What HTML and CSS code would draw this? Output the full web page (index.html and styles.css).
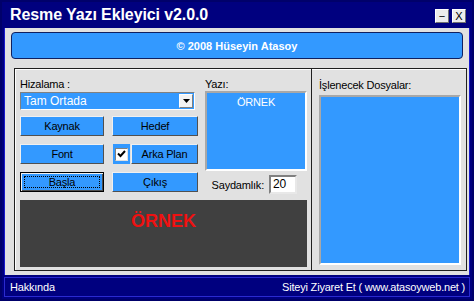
FILE: index.html
```html
<!DOCTYPE html>
<html>
<head>
<meta charset="utf-8">
<link rel="stylesheet" href="styles.css">
</head>
<body>
<div class="window">
  <div class="titlebar">
    <span class="title">Resme Yazı Ekleyici v2.0.0</span>
    <div class="tb-buttons">
      <span class="tb-btn">&minus;</span>
      <span class="tb-btn">X</span>
    </div>
  </div>
  <div class="client">
    <div class="banner">© 2008 Hüseyin Atasoy</div>
    <div class="panel">
      <div class="left">
        <div class="top">
          <div class="controls">
            <div class="lbl">Hizalama :</div>
            <div class="select">
              <span>Tam Ortada</span>
              <span class="arrow"><svg width="7" height="4" viewBox="0 0 7 4"><path d="M0 0H7L3.5 4Z" fill="#000"/></svg></span>
            </div>
            <div class="btn-grid">
              <div class="btn">Kaynak</div>
              <div class="btn">Hedef</div>
              <div class="btn">Font</div>
              <div class="chk-row">
                <div class="chk-wrap"><span class="chk"><svg width="9" height="8" viewBox="0 0 9 8"><path d="M1 3.5L3.5 6L8 1" fill="none" stroke="#000" stroke-width="2"/></svg></span></div>
                <div class="btn">Arka Plan</div>
              </div>
              <div class="btn btn-default"><span class="focus">Başla</span></div>
              <div class="btn">Çıkış</div>
            </div>
          </div>
          <div class="yazi">
            <div class="lbl">Yazı:</div>
            <div class="textarea">ÖRNEK</div>
            <div class="sayd">
              <span>Saydamlık:</span>
              <span class="input">20</span>
            </div>
          </div>
        </div>
        <div class="preview">ÖRNEK</div>
      </div>
      <div class="right">
        <div class="lbl">İşlenecek Dosyalar:</div>
        <div class="listbox"></div>
      </div>
    </div>
  </div>
  <div class="status">
    <span>Hakkında</span>
    <span>Siteyi Ziyaret Et ( www.atasoyweb.net )</span>
  </div>
</div>
</body>
</html>
```

FILE: styles.css
```css
* { box-sizing: border-box; }
html, body { margin: 0; padding: 0; }
body {
  width: 474px;
  height: 301px;
  overflow: hidden;
  font-family: "Liberation Sans", Arial, sans-serif;
  font-size: 11px;
  letter-spacing: -0.2px;
  color: #000;
}
.window {
  width: 474px;
  height: 301px;
  background: #00007f;
  border: 2px solid #00006a;
  padding: 0 2px 2px;
  display: flex;
  flex-direction: column;
}
.titlebar {
  height: 26px;
  flex: none;
  display: flex;
  align-items: center;
  justify-content: space-between;
  padding: 0 4px 0 6px;
}
.title {
  color: #fff;
  font-weight: bold;
  font-size: 16px;
  letter-spacing: -0.1px;
}
.tb-buttons { display: flex; gap: 3px; padding-top: 1px; }
.tb-btn {
  width: 14px;
  height: 14px;
  background: #ececec;
  border: 1px solid;
  border-color: #fff #707070 #707070 #fff;
  font-size: 11px;
  line-height: 12px;
  text-align: center;
  color: #000;
  letter-spacing: 0;
}
.client {
  flex: 1;
  background: #e1e1e1;
  border-left: 1px solid #1a1acc;
  border-right: 1px solid #1a1acc;
  padding: 4px 2px 4px 6px;
  display: flex;
  flex-direction: column;
}
.banner {
  height: 27px;
  margin-right: 4px;
  background: #3399ff;
  border: 1px solid #102060;
  border-radius: 4px;
  color: #fff;
  font-weight: bold;
  font-size: 11px;
  letter-spacing: 0;
  display: flex;
  align-items: center;
  justify-content: center;
}
.panel {
  margin-top: 9px;
  margin-left: 3px;
  flex: 1;
  border: 1px solid #202020;
  box-shadow: inset 1px 1px 0 #fff;
  display: flex;
}
.left {
  width: 297px;
  border-right: 1px solid #202020;
  padding: 9px 0 0 5px;
  display: flex;
  flex-direction: column;
}
.top { display: flex; gap: 7px; }
.lbl { height: 13px; line-height: 13px; }
.controls { width: 178px; display: flex; flex-direction: column; }
.select {
  margin-top: 1px;
  width: 175px;
  height: 18px;
  background: #3399ff;
  border: 1px solid;
  border-color: #808080 #fff #fff #808080;
  color: #fff;
  font-size: 12px;
  letter-spacing: 0;
  display: flex;
  align-items: center;
  justify-content: space-between;
  padding: 0 1px 0 3px;
}
.arrow {
  width: 14px;
  height: 14px;
  background: #f4f4f4;
  border: 1px solid;
  border-color: #fff #808080 #808080 #fff;
  display: flex;
  align-items: center;
  justify-content: center;
}
.btn-grid {
  margin-top: 6px;
  display: grid;
  grid-template-columns: 84px 86px;
  column-gap: 8px;
  row-gap: 8px;
}
.btn {
  height: 20px;
  background: #3399ff;
  border: 1px solid;
  border-color: #f0f0f0 #505050 #505050 #f0f0f0;
  display: flex;
  align-items: center;
  justify-content: center;
}
.btn-default {
  border: 1px solid #000;
  box-shadow: inset 1px 1px 0 #f0f0f0, inset -1px -1px 0 #505050;
  padding: 3px;
}
.focus {
  flex: 1;
  height: 100%;
  border: 1px dotted #000;
  display: flex;
  align-items: center;
  justify-content: center;
}
.chk-row { display: flex; gap: 1px; margin-left: 1px; }
.chk-wrap {
  width: 17px;
  height: 20px;
  background: #3399ff;
  display: flex;
  align-items: center;
  justify-content: center;
}
.chk {
  width: 13px;
  height: 13px;
  background: #fff;
  border: 1px solid;
  border-color: #808080 #e0e0e0 #e0e0e0 #808080;
  display: flex;
  align-items: center;
  justify-content: center;
}
.chk-row .btn { flex: 1; }
.yazi { width: 102px; display: flex; flex-direction: column; }
.textarea {
  width: 102px;
  height: 80px;
  background: #3399ff;
  border: 2px solid;
  border-color: #a8a8a8 #fff #fff #a8a8a8;
  color: #fff;
  text-align: center;
  padding-top: 2px;
  line-height: 14px;
}
.sayd {
  margin-top: 4px;
  display: flex;
  align-items: center;
  justify-content: flex-end;
  gap: 5px;
  padding-right: 10px;
}
.input {
  width: 28px;
  height: 19px;
  background: #fff;
  border: 2px solid;
  border-color: #808080 #e8e8e8 #e8e8e8 #808080;
  padding-left: 2px;
  font-size: 12px;
  line-height: 15px;
}
.preview {
  margin-top: 6px;
  width: 287px;
  height: 67px;
  background: #404040;
  color: #ee1111;
  font-weight: bold;
  font-size: 18px;
  letter-spacing: 0;
  text-align: center;
  padding-top: 11px;
}
.right {
  flex: 1;
  padding: 10px 5px 5px 7px;
  display: flex;
  flex-direction: column;
}
.right .lbl { height: 16px; }
.listbox {
  flex: 1;
  background: #3399ff;
  border: 2px solid;
  border-color: #a8a8a8 #fff #fff #a8a8a8;
}
.status {
  flex: none;
  height: 20px;
  margin-top: 2px;
  border: 1px solid #2a2ad0;
  background: #00007f;
  color: #fff;
  display: flex;
  align-items: center;
  justify-content: space-between;
  padding: 0 4px 0 5px;
}
```
